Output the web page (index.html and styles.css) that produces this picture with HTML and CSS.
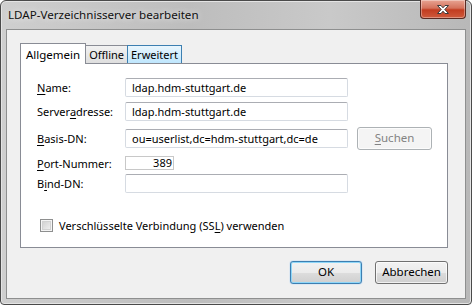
FILE: index.html
```html
<!DOCTYPE html>
<html lang="de">
<head>
    <meta charset="UTF-8">
    <title>LDAP-Verzeichnisserver bearbeiten</title>
    <link rel="stylesheet" href="styles.css">
</head>
<body>
    <div class="window">
        <div class="titlebar">
            <span class="title">LDAP-Verzeichnisserver bearbeiten</span>
            <div class="close-btn">
                <svg width="16" height="11" viewBox="0 0 16 11">
                    <path d="M2.5 1.5 L6 1.5 L8 3.8 L10 1.5 L13.5 1.5 L9.8 5.5 L13.5 9.5 L10 9.5 L8 7.2 L6 9.5 L2.5 9.5 L6.2 5.5 Z" fill="#fff" stroke="#3b3b3b" stroke-width="1" stroke-linejoin="round"/>
                </svg>
            </div>
        </div>
        <div class="client">
            <div class="tabs">
                <div class="tab active">Allgemein</div>
                <div class="tab">Offline</div>
                <div class="tab hover">Erweitert</div>
            </div>
            <div class="panel">
                <div class="row">
                    <label class="lbl"><u>N</u>ame:</label>
                    <div class="input wide">ldap.hdm-stuttgart.de</div>
                </div>
                <div class="row r-server">
                    <label class="lbl">Server<u>a</u>dresse:</label>
                    <div class="input wide">ldap.hdm-stuttgart.de</div>
                </div>
                <div class="row r-base">
                    <label class="lbl"><u>B</u>asis-DN:</label>
                    <div class="input wide">ou=userlist,dc=hdm-stuttgart,dc=de</div>
                    <div class="btn disabled"><u>S</u>uchen</div>
                </div>
                <div class="row r-port">
                    <label class="lbl"><u>P</u>ort-Nummer:</label>
                    <div class="input port">389</div>
                </div>
                <div class="row r-bind">
                    <label class="lbl">B<u>i</u>nd-DN:</label>
                    <div class="input wide"></div>
                </div>
                <div class="check-row">
                    <span class="checkbox"></span>
                    <span>Verschlüsselte Verbindung (SS<u>L</u>) verwenden</span>
                </div>
            </div>
            <div class="actions">
                <div class="btn default">OK</div>
                <div class="btn">Abbrechen</div>
            </div>
        </div>
    </div>
</body>
</html>
```

FILE: styles.css
```css
body, html {
    margin: 0;
    padding: 0;
    width: 100%;
    height: 100%;
    overflow: hidden;
    background: #fff;
}
body {
    font-family: "Noto Sans", "Liberation Sans", sans-serif;
    font-size: 11px;
    color: #000;
}
u {
    text-decoration-thickness: 1px;
    text-underline-offset: 2px;
}
.window {
    width: 472px;
    height: 305px;
    box-sizing: border-box;
    border: 1px solid #4a4a4a;
    border-radius: 6px 6px 4px 4px;
    background: linear-gradient(90deg, #cfcfcf 0%, #bdbdbd 40%, #c9c9c9 70%, #b8b8b8 100%);
    box-shadow: inset 0 0 0 1px #e4e4e4;
    padding: 0 5px 5px 5px;
    display: flex;
    flex-direction: column;
}
.titlebar {
    height: 28px;
    display: flex;
    justify-content: space-between;
    align-items: flex-start;
}
.title {
    margin: 6px 0 0 2px;
    color: #111;
    font-size: 11.6px;
    text-shadow: 0 0 6px rgba(255,255,255,0.9);
}
.close-btn {
    width: 44px;
    height: 18px;
    margin-top: -1px;
    border: 1px solid #5a2a22;
    border-top: none;
    border-radius: 0 0 4px 4px;
    background: linear-gradient(#e8a493 0%, #d4725c 45%, #c23c20 55%, #cf5a3c 100%);
    display: flex;
    align-items: center;
    justify-content: center;
    box-shadow: inset 0 0 0 1px rgba(255,255,255,0.35);
}
.client {
    flex: 1;
    background: #f0f0f0;
    border: 1px solid #8e8f8f;
    padding: 13px 0 0 13px;
    display: flex;
    flex-direction: column;
}
.tabs {
    display: flex;
    height: 20px;
    align-items: flex-end;
    position: relative;
    z-index: 1;
}
.tab {
    height: 18px;
    box-sizing: border-box;
    border: 1px solid #898c95;
    border-bottom: none;
    margin-right: -1px;
    padding: 0 3px;
    line-height: 17px;
    background: linear-gradient(#f2f2f2, #dedede);
}
.tab.active {
    height: 21px;
    margin-bottom: -1px;
    background: #fff;
    padding: 2px 5px 0 5px;
    line-height: 17px;
    font-size: 11.5px;
}
.tab.hover {
    border-color: #3c7fb1;
    background: linear-gradient(#eaf6fd, #bee6fd);
}
.panel {
    width: 428px;
    height: 185px;
    box-sizing: border-box;
    background: #fff;
    border: 1px solid #898c95;
    padding: 14px 0 0 16px;
}
.row {
    display: flex;
    align-items: center;
    height: 19px;
}
.r-server {
    margin-top: 5px;
}
.r-base {
    margin-top: 8px;
}
.r-port {
    margin-top: 8px;
    height: 14px;
}
.r-bind {
    margin-top: 4px;
}
.lbl {
    width: 88px;
    white-space: nowrap;
}
.input {
    height: 19px;
    box-sizing: border-box;
    border: 1px solid #d6dbe2;
    border-top-color: #abadb3;
    border-radius: 2px;
    padding: 0 6px;
    line-height: 17px;
    background: #fff;
    white-space: nowrap;
    overflow: hidden;
}
.input.wide {
    width: 223px;
}
.input.port {
    width: 49px;
    height: 14px;
    line-height: 12px;
    border-radius: 0;
    text-align: right;
    padding: 0 1px;
    border-color: #c8c8c8;
    overflow: visible;
}
.row .btn.disabled {
    margin-left: 9px;
}
.btn {
    width: 73px;
    height: 23px;
    flex: none;
    box-sizing: border-box;
    border: 1px solid #707070;
    border-radius: 3px;
    background: linear-gradient(#f2f2f2 0%, #ebebeb 50%, #dddddd 51%, #cfcfcf 100%);
    box-shadow: inset 0 0 0 1px rgba(255,255,255,0.7);
    text-align: center;
    line-height: 20px;
    font-size: 11.5px;
}
.btn.disabled {
    width: 75px;
    border-color: #adb2b5;
    background: #f4f4f4;
    color: #838383;
}
.btn.default {
    width: 72px;
    border-color: #3c7fb1;
    box-shadow: inset 0 0 0 1px #8ed6f8, 0 0 1px #3399ff;
}
.check-row {
    display: flex;
    align-items: center;
    gap: 6px;
    margin: 26px 0 0 3px;
    height: 13px;
}
.checkbox {
    width: 13px;
    height: 13px;
    box-sizing: border-box;
    border: 1px solid #8e8f8f;
    background: linear-gradient(135deg, #cbcbcb, #f6f6f6);
    box-shadow: inset 0 0 0 1px #f4f4f4, inset 0 0 0 2px #d2d2d2;
}
.actions {
    display: flex;
    justify-content: flex-end;
    gap: 13px;
    width: 428px;
    margin-top: 13px;
}
```
